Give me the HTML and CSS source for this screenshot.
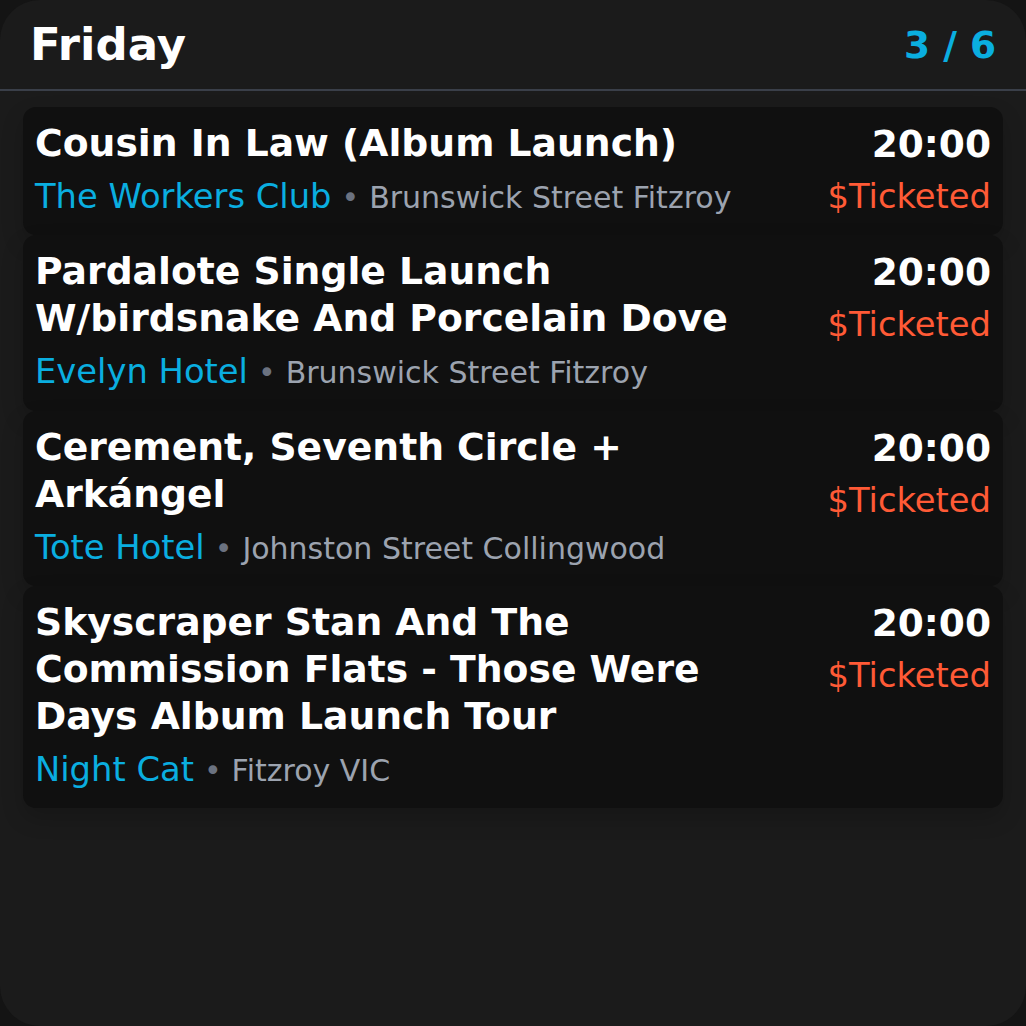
FILE: index.html
```html
<!DOCTYPE html>
<html>
<head>
<meta charset="utf-8">
<link rel="stylesheet" href="styles.css">
</head>
<body>
<div class="screen">
  <header class="header">
    <h1 class="day">Friday</h1>
    <div class="counter">3 / 6</div>
  </header>
  <main class="list">
    <article class="card">
      <div class="info">
        <div class="title">Cousin In Law (Album Launch)</div>
        <div class="venue"><span class="vname">The Workers Club</span><span class="dot">•</span><span class="addr">Brunswick Street Fitzroy</span></div>
      </div>
      <div class="meta">
        <div class="time">20:00</div>
        <div class="price">$Ticketed</div>
      </div>
    </article>
    <article class="card">
      <div class="info">
        <div class="title">Pardalote Single Launch W/birdsnake And Porcelain Dove</div>
        <div class="venue"><span class="vname">Evelyn Hotel</span><span class="dot">•</span><span class="addr">Brunswick Street Fitzroy</span></div>
      </div>
      <div class="meta">
        <div class="time">20:00</div>
        <div class="price">$Ticketed</div>
      </div>
    </article>
    <article class="card">
      <div class="info">
        <div class="title">Cerement, Seventh Circle + Arkángel</div>
        <div class="venue"><span class="vname">Tote Hotel</span><span class="dot">•</span><span class="addr">Johnston Street Collingwood</span></div>
      </div>
      <div class="meta">
        <div class="time">20:00</div>
        <div class="price">$Ticketed</div>
      </div>
    </article>
    <article class="card">
      <div class="info">
        <div class="title">Skyscraper Stan And The Commission Flats - Those Were Days Album Launch Tour</div>
        <div class="venue"><span class="vname">Night Cat</span><span class="dot">•</span><span class="addr">Fitzroy VIC</span></div>
      </div>
      <div class="meta">
        <div class="time">20:00</div>
        <div class="price">$Ticketed</div>
      </div>
    </article>
  </main>
</div>
</body>
</html>
```

FILE: styles.css
```css
html, body {
  margin: 0;
  padding: 0;
  background: #141414;
}
body {
  font-family: "DejaVu Sans", sans-serif;
  color: #ffffff;
}
.screen {
  width: 1026px;
  height: 1026px;
  box-sizing: border-box;
  background: #1b1b1b;
  border-radius: 40px;
  overflow: hidden;
}
.header {
  display: flex;
  justify-content: space-between;
  align-items: center;
  padding: 15px 30px 14px 30px;
  border-bottom: 2px solid #3a3f49;
}
.day {
  margin: 0;
  font-size: 45px;
  line-height: 60px;
  font-weight: bold;
}
.counter {
  font-size: 37.5px;
  line-height: 52.5px;
  font-weight: bold;
  color: #0aaee0;
}
.list {
  display: flex;
  flex-direction: column;
  padding: 16px 23px;
}
.card {
  display: flex;
  justify-content: space-between;
  gap: 20px;
  background: #101010;
  border-radius: 13px;
  padding: 13px 12px 12px 12px;
  box-shadow: 0 10px 22px rgba(0, 0, 0, 0.18);
}
.info {
  flex: 1;
  min-width: 0;
}
.title {
  font-size: 37.7px;
  line-height: 46.9px;
  font-weight: bold;
  max-width: 720px;
}
.venue {
  margin-top: 4px;
  font-size: 33.75px;
  line-height: 52.5px;
  white-space: nowrap;
}
.vname {
  color: #0aaee0;
}
.dot {
  font-size: 30px;
  line-height: 1;
  color: #6b7280;
  margin: 0 10px;
}
.addr {
  font-size: 30px;
  line-height: 1;
  color: #9ca3af;
}
.meta {
  display: flex;
  flex-direction: column;
  align-items: flex-end;
  flex-shrink: 0;
}
.time {
  font-size: 37.5px;
  line-height: 46.9px;
  font-weight: bold;
  margin-top: 1px;
}
.price {
  font-size: 33.75px;
  line-height: 52.5px;
  color: #ff5a36;
  margin-top: 3px;
}
```
